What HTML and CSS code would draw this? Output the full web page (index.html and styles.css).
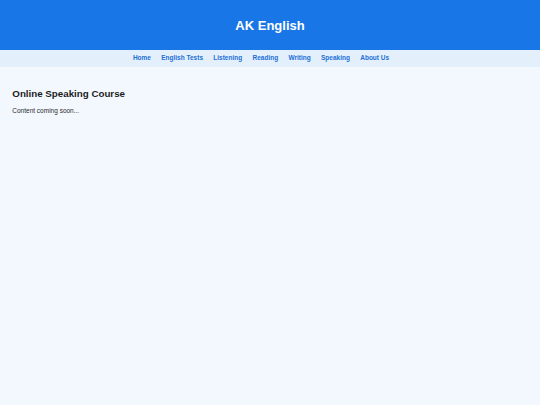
FILE: index.html
```html
<!DOCTYPE html>
<html lang="en">
<head>
<meta charset="utf-8">
<title>AK English</title>
<link rel="stylesheet" href="styles.css">
</head>
<body>
<header class="site-header">
  <h1 class="site-title">AK English</h1>
</header>
<nav class="site-nav">
  <ul class="nav-list">
    <li><a href="#">Home</a></li>
    <li><a href="#">English Tests</a></li>
    <li><a href="#">Listening</a></li>
    <li><a href="#">Reading</a></li>
    <li><a href="#">Writing</a></li>
    <li><a href="#">Speaking</a></li>
    <li><a href="#">About Us</a></li>
  </ul>
</nav>
<main class="content">
  <h2 class="page-title">Online Speaking Course</h2>
  <p class="page-text">Content coming soon...</p>
</main>
</body>
</html>
```

FILE: styles.css
```css
html, body {
  margin: 0;
  padding: 0;
}
body {
  background: #f3f8fe;
  font-family: "Liberation Sans", Arial, sans-serif;
  min-height: 405px;
}
.site-header {
  background: #1976e6;
  height: 50px;
  display: flex;
  align-items: center;
  justify-content: center;
}
.site-title {
  margin: 0;
  color: #ffffff;
  font-size: 13px;
  font-weight: bold;
  line-height: 15px;
}
.site-nav {
  background: #e3f0fc;
  height: 16.5px;
  display: flex;
  align-items: center;
  justify-content: center;
}
.nav-list {
  list-style: none;
  margin: 0;
  padding: 0 18px 0 0;
  display: flex;
  gap: 10.3px;
}
.nav-list a {
  color: #1b6fd6;
  text-decoration: none;
  font-weight: bold;
  font-size: 6.5px;
  line-height: 8px;
  display: block;
}
.content {
  padding: 21px 12.3px;
}
.page-title {
  margin: 0;
  color: #1c1c1c;
  font-size: 9.75px;
  font-weight: bold;
  line-height: 11px;
}
.page-text {
  margin: 8.5px 0 0;
  color: #2a2a2a;
  font-size: 6.5px;
  line-height: 8px;
}
```
